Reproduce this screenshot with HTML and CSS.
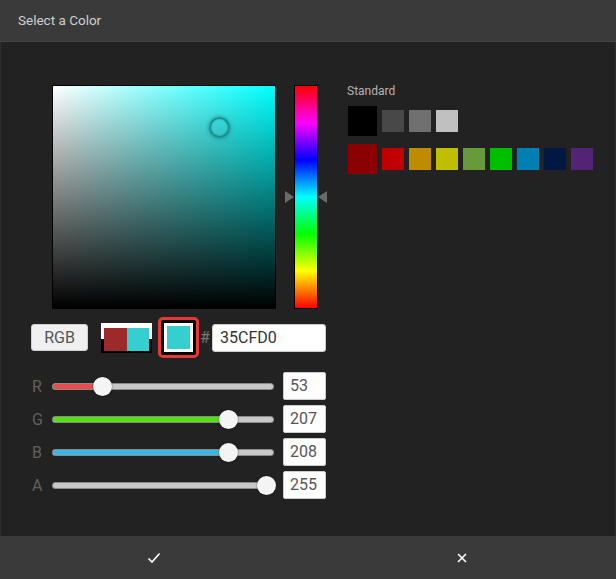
FILE: index.html
```html
<!DOCTYPE html>
<html>
<head>
<meta charset="utf-8">
<link rel="stylesheet" href="styles.css">
</head>
<body>
<div class="dialog">
  <div class="header">Select a Color</div>
  <div class="body">
    <div class="left">
      <div class="picker">
        <div class="sv">
          <div class="cursor"></div>
        </div>
        <div class="hue-wrap">
          <div class="arrow arrow-r"></div>
          <div class="hue"></div>
          <div class="arrow arrow-l"></div>
        </div>
      </div>
      <div class="controls">
        <div class="mode-btn">RGB</div>
        <div class="compare">
          <div class="cmp-old"></div>
          <div class="cmp-new"></div>
        </div>
        <div class="current"><div class="current-inner"><div class="current-fill"></div></div></div>
        <span class="hash">#</span>
        <div class="hex">35CFD0</div>
      </div>
      <div class="sliders">
        <div class="srow">
          <span class="slabel">R</span>
          <div class="track"><div class="fill fill-r" style="width:23%"></div><div class="thumb" style="left:49px"></div></div>
          <div class="num">53</div>
        </div>
        <div class="srow">
          <span class="slabel">G</span>
          <div class="track"><div class="fill fill-g" style="width:80%"></div><div class="thumb" style="left:175px"></div></div>
          <div class="num">207</div>
        </div>
        <div class="srow">
          <span class="slabel">B</span>
          <div class="track"><div class="fill fill-b" style="width:80%"></div><div class="thumb" style="left:175px"></div></div>
          <div class="num">208</div>
        </div>
        <div class="srow">
          <span class="slabel">A</span>
          <div class="track"><div class="thumb" style="left:213px"></div></div>
          <div class="num">255</div>
        </div>
      </div>
    </div>
    <div class="right">
      <div class="std-label">Standard</div>
      <div class="swrow">
        <div class="sw big" style="background:#000000"></div>
        <div class="sw" style="background:#484848"></div>
        <div class="sw" style="background:#707070"></div>
        <div class="sw" style="background:#c0c0c0"></div>
      </div>
      <div class="swrow">
        <div class="sw big" style="background:#8b0000"></div>
        <div class="sw" style="background:#c00000"></div>
        <div class="sw" style="background:#bf8c00"></div>
        <div class="sw" style="background:#bfbf00"></div>
        <div class="sw" style="background:#699a3a"></div>
        <div class="sw" style="background:#00bf00"></div>
        <div class="sw" style="background:#007fb2"></div>
        <div class="sw" style="background:#001842"></div>
        <div class="sw" style="background:#532473"></div>
      </div>
    </div>
  </div>
  <div class="footer">
    <div class="fbtn">
      <svg width="14" height="12" viewBox="0 0 14 12"><path d="M1.5 6.5 L5 10 L12.5 1.5" fill="none" stroke="#ffffff" stroke-width="1.6"/></svg>
    </div>
    <div class="fbtn">
      <svg width="10" height="10" viewBox="0 0 10 10"><path d="M1 1 L9 9 M9 1 L1 9" fill="none" stroke="#ffffff" stroke-width="1.6"/></svg>
    </div>
  </div>
</div>
</body>
</html>
```

FILE: styles.css
```css
* { box-sizing: border-box; }
html, body { margin: 0; padding: 0; }
body {
  background: #222222;
  font-family: Roboto, "Noto Sans", sans-serif;
  width: 616px;
  height: 579px;
  overflow: hidden;
}
.dialog {
  display: flex;
  flex-direction: column;
  width: 616px;
  height: 579px;
}
.header {
  height: 42px;
  background: #3a3a3a;
  border-bottom: 1px solid #464646;
  color: #cfcfcf;
  font-size: 13.5px;
  padding-left: 18px;
  line-height: 40px;
}
.body {
  flex: 1;
  display: flex;
  background: #222222;
  border-left: 1px solid #2e2e2e;
  border-right: 1px solid #2e2e2e;
  padding: 43px 0 0 30px;
}
.left {
  width: 296px;
  display: flex;
  flex-direction: column;
}
.picker {
  display: flex;
  margin-left: 21px;
}
.sv {
  position: relative;
  width: 225px;
  height: 224px;
  border: 1px solid #000;
  background: linear-gradient(to top, #000000, rgba(0,0,0,0)), linear-gradient(to right, #ffffff, #00ffff);
}
.cursor {
  position: absolute;
  left: 156px;
  top: 31px;
  width: 21px;
  height: 21px;
  border-radius: 50%;
  border: 2px solid rgba(25, 130, 130, 0.85);
  box-shadow: 0 0 4px rgba(0, 90, 90, 0.6), inset 0 0 2px rgba(0, 90, 90, 0.4);
}
.hue-wrap {
  display: flex;
  align-items: center;
  margin-left: 9px;
}
.hue {
  width: 24px;
  height: 224px;
  border: 1px solid #000;
  background: linear-gradient(to bottom, #ff0000 0%, #ff00ff 16.67%, #0000ff 33.33%, #00ffff 50%, #00ff00 66.67%, #ffff00 83.33%, #ff0000 100%);
}
.arrow {
  width: 0;
  height: 0;
  border-top: 6px solid transparent;
  border-bottom: 6px solid transparent;
}
.arrow-r { border-left: 9px solid #6a6a6a; }
.arrow-l { border-right: 9px solid #6a6a6a; }

.controls {
  display: flex;
  align-items: center;
  margin-top: 8px;
  height: 41px;
}
.mode-btn {
  width: 57px;
  height: 27px;
  background: #f0f0f0;
  border: 1px solid #cfcfcf;
  border-radius: 3px;
  color: #555;
  font-size: 16px;
  text-align: center;
  line-height: 25px;
}
.compare {
  margin-left: 13px;
  width: 51px;
  height: 30px;
  background: linear-gradient(to bottom, #ffffff 0, #ffffff 16px, #000000 16px);
  display: flex;
  padding: 5px 3px 2px 3px;
}
.cmp-old { flex: 1; background: #9d2a2b; }
.cmp-new { flex: 1; background: #35cfd0; }
.current {
  margin-left: 6px;
  width: 41px;
  height: 41px;
  border: 3px solid #e53838;
  border-radius: 5px;
  background: #000;
  padding: 3px;
}
.current-inner {
  width: 100%;
  height: 100%;
  background: #fff;
  padding: 3px;
}
.current-fill {
  width: 100%;
  height: 100%;
  background: #35cfd0;
}
.hash {
  color: #777;
  font-size: 16px;
  margin-left: 1px;
  width: 12px;
}
.hex {
  width: 114px;
  height: 28px;
  background: #fff;
  border: 1px solid #cccccc;
  border-radius: 3px;
  color: #333;
  font-size: 16px;
  line-height: 26px;
  padding-left: 7px;
}

.sliders {
  margin-top: 14px;
  display: flex;
  flex-direction: column;
  gap: 5px;
}
.srow {
  display: flex;
  align-items: center;
  height: 28px;
}
.slabel {
  width: 22px;
  color: #606060;
  font-size: 16px;
  padding-left: 1px;
}
.track {
  position: relative;
  width: 220px;
  height: 5px;
  border-radius: 3px;
  background: #c8c8c8;
  box-shadow: 0 0 0 1px #8a8a8a;
}
.fill {
  height: 5px;
  border-radius: 3px;
}
.fill-r { background: #ea4b4b; }
.fill-g { background: #55e012; }
.fill-b { background: #3cb6e6; }
.thumb {
  position: absolute;
  top: -7px;
  width: 19px;
  height: 19px;
  margin-left: -9px;
  border-radius: 50%;
  background: #f4f4f4;
  box-shadow: 0 0 2px rgba(0,0,0,0.6);
}
.num {
  margin-left: 10px;
  width: 43px;
  height: 28px;
  background: #fff;
  border: 1px solid #cccccc;
  border-radius: 2px;
  color: #555;
  font-size: 16px;
  line-height: 26px;
  padding-left: 6px;
}

.right {
  margin-left: 20px;
  display: flex;
  flex-direction: column;
}
.std-label {
  color: #b4b4b4;
  font-size: 12px;
  line-height: 14px;
  margin-top: -1px;
}
.swrow {
  display: flex;
  align-items: center;
  gap: 5px;
  margin-left: 1px;
}
.swrow:nth-child(2) { margin-top: 8px; }
.swrow:nth-child(3) { margin-top: 8px; }
.sw {
  width: 22px;
  height: 22px;
}
.sw.big {
  width: 29px;
  height: 30px;
}

.footer {
  height: 43px;
  background: #3a3a3a;
  display: flex;
}
.fbtn {
  flex: 1;
  display: flex;
  align-items: center;
  justify-content: center;
}
```
